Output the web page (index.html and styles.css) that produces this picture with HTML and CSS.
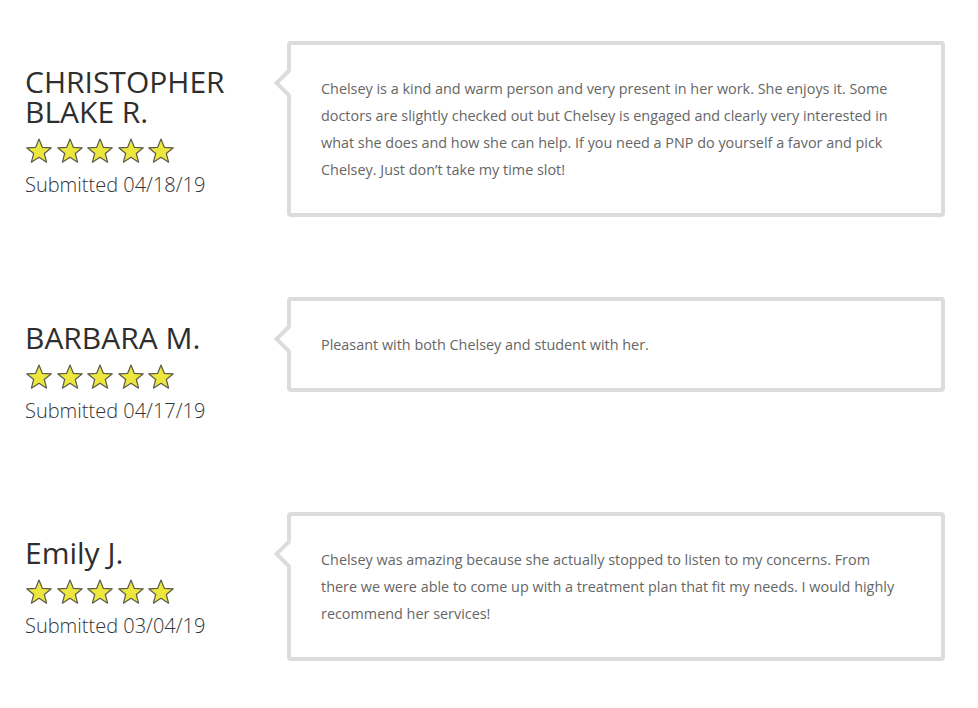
FILE: index.html
```html
<!DOCTYPE html>
<html>
<head>
<meta charset="utf-8">
<link rel="stylesheet" href="styles.css">
</head>
<body>
<div class="reviews">
  <div class="review">
    <div class="meta">
      <div class="name">CHRISTOPHER<br>BLAKE R.</div>
      <div class="stars">
        <svg class="star" viewBox="0 0 27 26"><polygon points="13.5,1 16.8,9.3 25.8,9.8 18.8,15.5 21.1,24.2 13.5,19.3 5.9,24.2 8.2,15.5 1.2,9.8 10.2,9.3"/></svg>
        <svg class="star" viewBox="0 0 27 26"><polygon points="13.5,1 16.8,9.3 25.8,9.8 18.8,15.5 21.1,24.2 13.5,19.3 5.9,24.2 8.2,15.5 1.2,9.8 10.2,9.3"/></svg>
        <svg class="star" viewBox="0 0 27 26"><polygon points="13.5,1 16.8,9.3 25.8,9.8 18.8,15.5 21.1,24.2 13.5,19.3 5.9,24.2 8.2,15.5 1.2,9.8 10.2,9.3"/></svg>
        <svg class="star" viewBox="0 0 27 26"><polygon points="13.5,1 16.8,9.3 25.8,9.8 18.8,15.5 21.1,24.2 13.5,19.3 5.9,24.2 8.2,15.5 1.2,9.8 10.2,9.3"/></svg>
        <svg class="star" viewBox="0 0 27 26"><polygon points="13.5,1 16.8,9.3 25.8,9.8 18.8,15.5 21.1,24.2 13.5,19.3 5.9,24.2 8.2,15.5 1.2,9.8 10.2,9.3"/></svg>
      </div>
      <div class="date">Submitted 04/18/19</div>
    </div>
    <div class="bubble">
      <p>Chelsey is a kind and warm person and very present in her work. She enjoys it. Some doctors are slightly checked out but Chelsey is engaged and clearly very interested in what she does and how she can help. If you need a PNP do yourself a favor and pick Chelsey. Just don’t take my time slot!</p>
    </div>
  </div>

  <div class="review">
    <div class="meta">
      <div class="name">BARBARA M.</div>
      <div class="stars">
        <svg class="star" viewBox="0 0 27 26"><polygon points="13.5,1 16.8,9.3 25.8,9.8 18.8,15.5 21.1,24.2 13.5,19.3 5.9,24.2 8.2,15.5 1.2,9.8 10.2,9.3"/></svg>
        <svg class="star" viewBox="0 0 27 26"><polygon points="13.5,1 16.8,9.3 25.8,9.8 18.8,15.5 21.1,24.2 13.5,19.3 5.9,24.2 8.2,15.5 1.2,9.8 10.2,9.3"/></svg>
        <svg class="star" viewBox="0 0 27 26"><polygon points="13.5,1 16.8,9.3 25.8,9.8 18.8,15.5 21.1,24.2 13.5,19.3 5.9,24.2 8.2,15.5 1.2,9.8 10.2,9.3"/></svg>
        <svg class="star" viewBox="0 0 27 26"><polygon points="13.5,1 16.8,9.3 25.8,9.8 18.8,15.5 21.1,24.2 13.5,19.3 5.9,24.2 8.2,15.5 1.2,9.8 10.2,9.3"/></svg>
        <svg class="star" viewBox="0 0 27 26"><polygon points="13.5,1 16.8,9.3 25.8,9.8 18.8,15.5 21.1,24.2 13.5,19.3 5.9,24.2 8.2,15.5 1.2,9.8 10.2,9.3"/></svg>
      </div>
      <div class="date">Submitted 04/17/19</div>
    </div>
    <div class="bubble">
      <p>Pleasant with both Chelsey and student with her.</p>
    </div>
  </div>

  <div class="review">
    <div class="meta">
      <div class="name">Emily J.</div>
      <div class="stars">
        <svg class="star" viewBox="0 0 27 26"><polygon points="13.5,1 16.8,9.3 25.8,9.8 18.8,15.5 21.1,24.2 13.5,19.3 5.9,24.2 8.2,15.5 1.2,9.8 10.2,9.3"/></svg>
        <svg class="star" viewBox="0 0 27 26"><polygon points="13.5,1 16.8,9.3 25.8,9.8 18.8,15.5 21.1,24.2 13.5,19.3 5.9,24.2 8.2,15.5 1.2,9.8 10.2,9.3"/></svg>
        <svg class="star" viewBox="0 0 27 26"><polygon points="13.5,1 16.8,9.3 25.8,9.8 18.8,15.5 21.1,24.2 13.5,19.3 5.9,24.2 8.2,15.5 1.2,9.8 10.2,9.3"/></svg>
        <svg class="star" viewBox="0 0 27 26"><polygon points="13.5,1 16.8,9.3 25.8,9.8 18.8,15.5 21.1,24.2 13.5,19.3 5.9,24.2 8.2,15.5 1.2,9.8 10.2,9.3"/></svg>
        <svg class="star" viewBox="0 0 27 26"><polygon points="13.5,1 16.8,9.3 25.8,9.8 18.8,15.5 21.1,24.2 13.5,19.3 5.9,24.2 8.2,15.5 1.2,9.8 10.2,9.3"/></svg>
      </div>
      <div class="date">Submitted 03/04/19</div>
    </div>
    <div class="bubble">
      <p>Chelsey was amazing because she actually stopped to listen to my concerns. From there we were able to come up with a treatment plan that fit my needs. I would highly recommend her services!</p>
    </div>
  </div>
</div>
</body>
</html>
```

FILE: styles.css
```css
html, body {
  margin: 0;
  padding: 0;
  background: #ffffff;
}

body {
  font-family: "Open Sans", "Liberation Sans", sans-serif;
  color: #333333;
}

.reviews {
  padding: 41px 33px 0 25px;
}

.review {
  display: flex;
  align-items: flex-start;
  margin-bottom: 80px;
}

.meta {
  width: 262px;
  flex: none;
  padding-top: 26px;
}

.name {
  font-size: 30px;
  line-height: 30px;
  font-weight: 400;
  color: #2e2e2e;
}

.stars {
  display: flex;
  gap: 2.5px;
  margin-top: 11px;
  height: 25px;
}

.star {
  width: 28px;
  height: 26px;
  flex: none;
  display: block;
}

.star polygon {
  fill: #ede73d;
  stroke: #5b5a4c;
  stroke-width: 1.2;
  stroke-linejoin: round;
}

.date {
  margin-top: 8px;
  margin-bottom: 7px;
  font-size: 20px;
  line-height: 28px;
  font-weight: 300;
  color: #333333;
}

.bubble {
  flex: 1;
  position: relative;
  border: 4px solid #dcdcdc;
  border-radius: 4px;
  padding: 30px 40px 30px 30px;
  background: #ffffff;
}

.bubble::before {
  content: "";
  position: absolute;
  left: -13px;
  top: 28px;
  width: 20px;
  height: 20px;
  box-sizing: border-box;
  background: #ffffff;
  border-left: 4px solid #dcdcdc;
  border-bottom: 4px solid #dcdcdc;
  transform: rotate(45deg);
}

.bubble p {
  position: relative;
  margin: 0;
  font-size: 14.4px;
  line-height: 27px;
  font-weight: 400;
  color: #666666;
}
```
